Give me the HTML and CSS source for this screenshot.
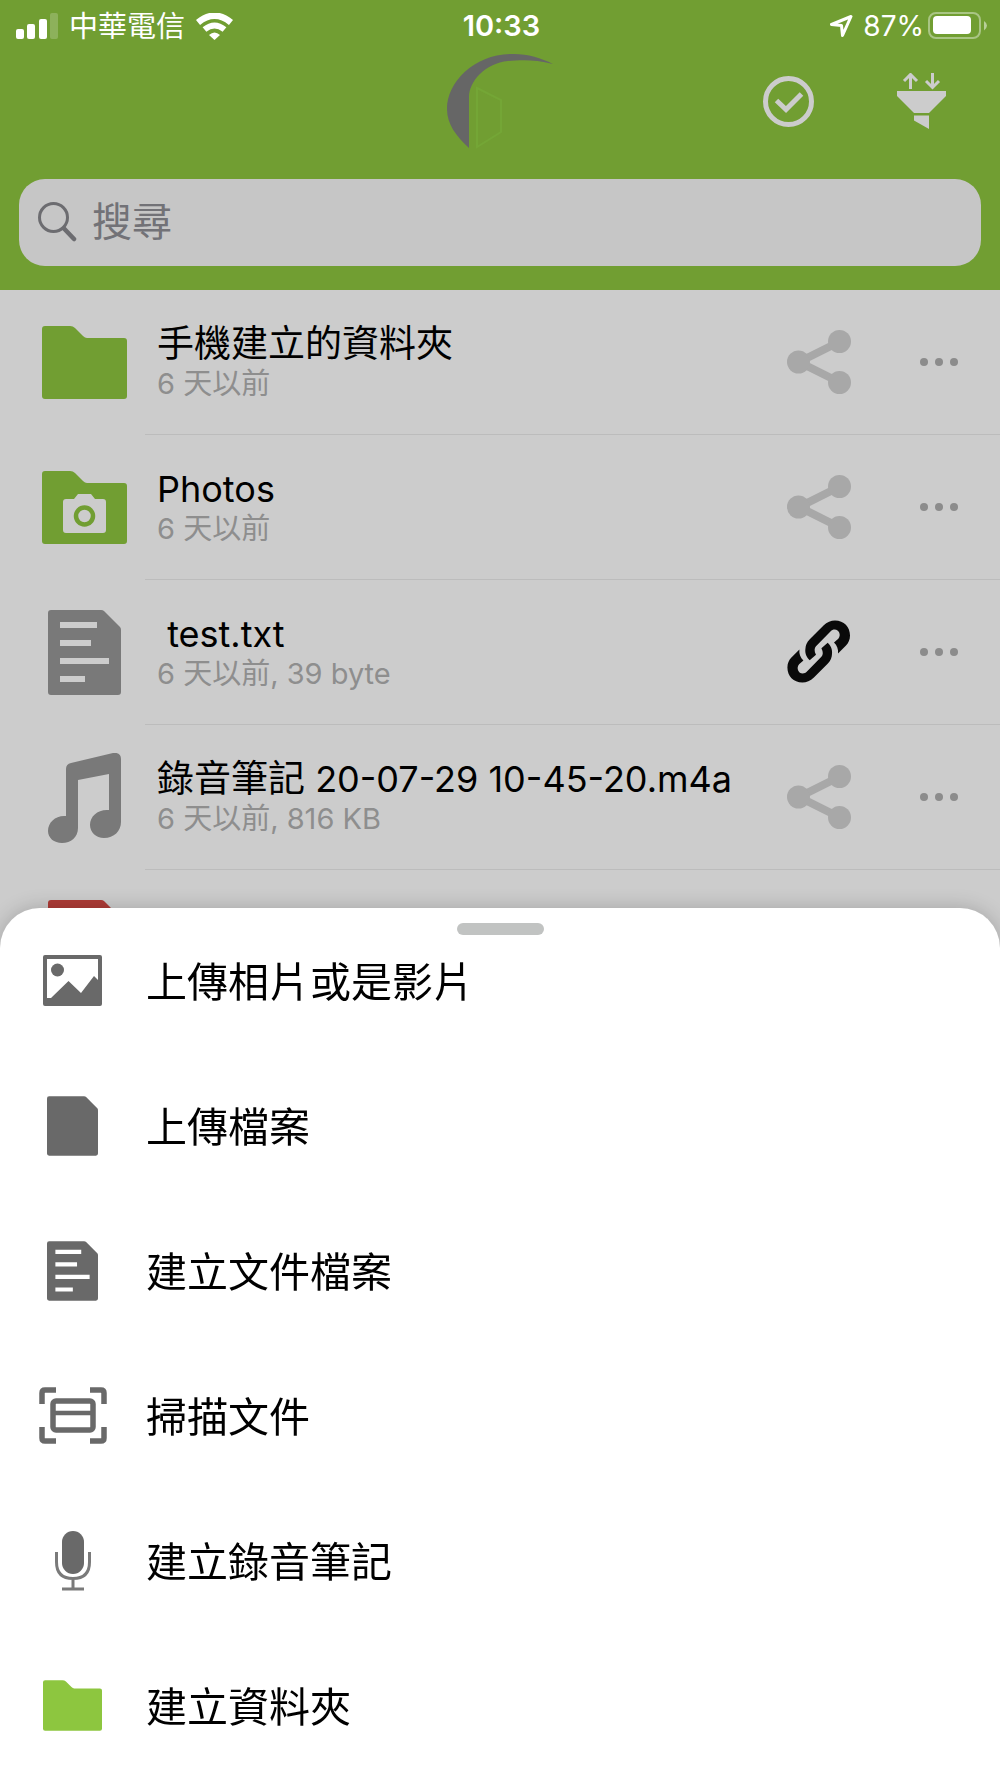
FILE: index.html
```html
<!DOCTYPE html>
<html lang="zh-Hant">
<head>
<meta charset="utf-8">
<meta name="viewport" content="width=device-width, initial-scale=1">
<title>檔案</title>
<link rel="stylesheet" href="styles.css">
</head>
<body>
<svg class="sprite" aria-hidden="true">
  <symbol id="folder" viewBox="0 0 85 73">
    <path d="M3 0H28Q31 0 33 2L41 10Q43 12 45 12H82Q85 12 85 15V70Q85 73 82 73H3Q0 73 0 70V3Q0 0 3 0Z"/>
  </symbol>
  <symbol id="page" viewBox="0 0 73 85">
    <path d="M3 0H53Q55 0 56 1L72 17Q73 18 73 20V82Q73 85 70 85H3Q0 85 0 82V3Q0 0 3 0Z"/>
  </symbol>
  <symbol id="document" viewBox="0 0 73 85">
    <path fill-rule="evenodd" d="M3 0H53Q55 0 56 1L72 17Q73 18 73 20V82Q73 85 70 85H3Q0 85 0 82V3Q0 0 3 0ZM12 12V18H49V12ZM12 30V36H43V30ZM12 48V54H61V48ZM12 66V72H37V66Z"/>
  </symbol>
  <symbol id="share" viewBox="0 0 64 64">
    <path d="M52 12L12 32L52 52" fill="none" stroke="currentColor" stroke-width="8"/>
    <circle cx="11.500" cy="32" r="11.500"/><circle cx="52.500" cy="11.500" r="11.500"/><circle cx="52.500" cy="52.500" r="11.500"/>
  </symbol>
  <symbol id="link-half" viewBox="0 0 64 64">
    <path d="M22.700 40.200C18.500 36.500 18 31.500 18.400 29C18.600 25.500 19.500 22.500 23 19L36.500 5.500C40 2 44 .5 48 .5C57 .5 63 7 63 15.500C63 19.500 61.500 23 59 25.500L51 33.500C51.500 29 50 25.500 47 22.500L51.300 18.800C54.500 15 52 9.500 47.700 9.500C46 9.500 44.700 10.200 43.700 11.200L29 26.200C27.300 28 27 31 29 34.800Z"/>
  </symbol>
  <symbol id="dots" viewBox="0 0 38 8">
    <circle cx="4" cy="4" r="4"/><circle cx="19" cy="4" r="4"/><circle cx="34" cy="4" r="4"/>
  </symbol>
</svg>

<header class="header">
  <div class="status">
    <div class="status-left">
      <svg width="42" height="26" viewBox="0 0 42 26" fill="#fff" aria-hidden="true">
        <rect x="0" y="16" width="8" height="10" rx="2"/><rect x="11" y="11" width="8" height="15" rx="2"/><rect x="23" y="6" width="8" height="20" rx="2"/><rect x="34" y="0" width="8" height="26" rx="2" opacity=".2"/>
      </svg>
      <span class="carrier">中華電信</span>
      <svg width="37" height="27" viewBox="0 0 37 27" fill="none" stroke="#fff" aria-hidden="true">
        <path d="M2 9.500Q18.500-4 35 9.500" stroke-width="6.500"/><path d="M8.500 16.500Q18.500 8.500 28.500 16.500" stroke-width="6"/><path d="M13 22Q18.500 17 24 22L18.500 27Z" fill="#fff" stroke="none"/>
      </svg>
    </div>
    <time class="clock">10:33</time>
    <div class="status-right">
      <svg width="23" height="22" viewBox="0 0 23 22" fill="none" stroke="#fff" stroke-width="3" stroke-linejoin="round" aria-hidden="true"><path d="M21 1.500L1.500 9.500L11.500 10.500L12.500 20.500Z"/></svg>
      <span class="charge">87%</span>
      <svg class="battery" width="59" height="28" viewBox="0 0 59 28" aria-hidden="true">
        <rect x="1" y="1" width="51" height="25" rx="7" fill="none" stroke="#fff" stroke-width="2" opacity=".4"/><rect x="5" y="4" width="38" height="18" rx="4" fill="#fff"/><path d="M56 9Q59 11 59 13.500T56 18.500Z" fill="#fff" opacity=".5"/>
      </svg>
    </div>
  </div>
  <div class="toolbar">
    <svg class="logo" width="106" height="96" viewBox="0 0 106 96" role="img" aria-label="Logo">
      <path d="M22 95C9 83 0 71 0 56C0 28 29 0 67 1C81 1 94 5 106 11C87 6 73 7 61 8C39 10 22 28 22 44Z" fill="#666"/>
      <path d="M30 35L54 47V79L30 94Z" fill="none" stroke="#74a636" stroke-width="2"/>
    </svg>
    <div class="actions">
      <button class="icon-button" aria-label="選取">
        <svg width="51" height="51" viewBox="0 0 51 51" fill="none" stroke="#ccc" aria-hidden="true"><circle cx="25.500" cy="25.500" r="23" stroke-width="5"/><path d="M13.500 24.500L23 33.500L38.500 18" stroke-width="5"/></svg>
      </button>
      <button class="icon-button" aria-label="排序與篩選">
        <svg width="49" height="56" viewBox="0 0 49 56" fill="#ccc" aria-hidden="true"><path d="M0 18H49V23L32 40H17L0 23ZM17 42.500H32V56L17 47.500Z"/><path d="M13.500 16V2M7 8L13.500 1.500L20 8M35.500 0V14M29 8L35.500 14.500L42 8" fill="none" stroke="#ccc" stroke-width="3"/></svg>
      </button>
    </div>
  </div>
  <form class="search" role="search">
    <svg width="39" height="40" viewBox="0 0 39 40" fill="none" stroke="#6c6c70" aria-hidden="true"><circle cx="15.500" cy="15.500" r="14" stroke-width="3"/><path d="M26 26.500L36 37" stroke-width="4.500" stroke-linecap="round"/></svg>
    <input class="search-input" type="text" placeholder="搜尋" aria-label="搜尋">
  </form>
</header>

<main>
  <ul class="files">
    <li class="file">
      <div class="file-icon"><svg class="green" width="85" height="73"><use href="#folder"/></svg></div>
      <div class="file-body">
        <div class="file-text"><div class="file-name">手機建立的資料夾</div><div class="file-meta">6 天以前</div></div>
        <button class="icon-button share" aria-label="分享"><svg width="64" height="64"><use href="#share"/></svg></button>
        <button class="icon-button more" aria-label="更多"><svg width="38" height="8"><use href="#dots"/></svg></button>
      </div>
    </li>
    <li class="file">
      <div class="file-icon"><svg class="green" width="85" height="73" viewBox="0 0 85 73"><use href="#folder"/><path d="M24 28H32L36 23H49L53 28H61Q64 28 64 31V59Q64 62 61 62H24Q21 62 21 59V31Q21 28 24 28Z" fill="#ccc"/><circle cx="42.500" cy="45" r="8.500" fill="none" stroke="#719e32" stroke-width="4.500"/></svg></div>
      <div class="file-body">
        <div class="file-text"><div class="file-name"><span class="latin">Photos</span></div><div class="file-meta">6 天以前</div></div>
        <button class="icon-button share" aria-label="分享"><svg width="64" height="64"><use href="#share"/></svg></button>
        <button class="icon-button more" aria-label="更多"><svg width="38" height="8"><use href="#dots"/></svg></button>
      </div>
    </li>
    <li class="file">
      <div class="file-icon"><svg class="gray" width="73" height="85"><use href="#document"/></svg></div>
      <div class="file-body">
        <div class="file-text"><div class="file-name"><span class="latin"> test.txt</span></div><div class="file-meta">6 天以前, 39 byte</div></div>
        <button class="icon-button linked" aria-label="連結"><svg width="64" height="64" viewBox="0 0 64 64"><use href="#link-half"/><use href="#link-half" transform="rotate(180 31.700 31.500)"/></svg></button>
        <button class="icon-button more" aria-label="更多"><svg width="38" height="8"><use href="#dots"/></svg></button>
      </div>
    </li>
    <li class="file">
      <div class="file-icon"><svg class="gray" width="73" height="90" viewBox="0 0 73 90"><path d="M23 10L65 0Q73-1 73 6V69C73 78 66 85 56 85C48 85 42 79 42 72C42 63 50 56 61 57V21L30 27V75C30 84 23 90 14 90C6 90 0 85 0 78C0 69 8 62 18 63V16Q18 11 23 10Z"/></svg></div>
      <div class="file-body">
        <div class="file-text"><div class="file-name">錄音筆記<span class="latin"> 20-07-29 10-45-20.m4a</span></div><div class="file-meta">6 天以前, 816 KB</div></div>
        <button class="icon-button share" aria-label="分享"><svg width="64" height="64"><use href="#share"/></svg></button>
        <button class="icon-button more" aria-label="更多"><svg width="38" height="8"><use href="#dots"/></svg></button>
      </div>
    </li>
    <li class="file">
      <div class="file-icon"><svg class="red" width="73" height="85"><use href="#page"/></svg></div>
    </li>
  </ul>
</main>

<section class="sheet" aria-label="新增">
  <div class="handle"></div>
  <button class="option"><span class="option-icon"><svg width="59" height="51" viewBox="0 0 59 51"><path fill-rule="evenodd" d="M2 0H57Q59 0 59 2V49Q59 51 57 51H2Q0 51 0 49V2Q0 0 2 0ZM4 4V43H8L25.500 26L38 38L51 21L55 25V4Z"/><circle cx="14.500" cy="15" r="6.500"/></svg></span><span class="option-label">上傳相片或是影片</span></button>
  <button class="option"><span class="option-icon"><svg width="51" height="60"><use href="#page"/></svg></span><span class="option-label">上傳檔案</span></button>
  <button class="option"><span class="option-icon"><svg width="51" height="60"><use href="#document"/></svg></span><span class="option-label">建立文件檔案</span></button>
  <button class="option"><span class="option-icon"><svg width="68" height="57" viewBox="0 0 68 57" fill="none" stroke="#696969" stroke-width="5.500"><path d="M17 3H6Q3 3 3 6V17M51 3H62Q65 3 65 6V17M3 40V51Q3 54 6 54H17M65 40V51Q65 54 62 54H51"/><rect x="14" y="14" width="40" height="29" rx="3"/><path d="M14 26H54" stroke-width="4.500"/></svg></span><span class="option-label">掃描文件</span></button>
  <button class="option"><span class="option-icon"><svg width="36" height="60" viewBox="0 0 36 60"><rect x="7" y="0" width="22" height="43" rx="11"/><path d="M1.500 21V31Q1.500 47.500 18 47.500T34.500 31V21M18 47V58M7 58H29" fill="none" stroke="#7a7a7a" stroke-width="3"/></svg></span><span class="option-label">建立錄音筆記</span></button>
  <button class="option"><span class="option-icon"><svg class="bright" width="59" height="51"><use href="#folder"/></svg></span><span class="option-label">建立資料夾</span></button>
</section>
</body>
</html>
```
FILE: styles.css
```css
* {
  box-sizing: border-box;
}

body {
  margin: 0;
  min-height: 100vh;
  background: #ccc;
  color: #000;
  font-family: Inter, "Noto Sans CJK TC", sans-serif;
}

button {
  border: 0;
  padding: 0;
  background: none;
  color: inherit;
  font: inherit;
}

svg {
  display: block;
  flex: none;
}

.sprite {
  display: none;
}

.header {
  background: #719e32;
  padding: 0 19px 24px;
}

.status {
  display: grid;
  grid-template-columns: 1fr auto 1fr;
  align-items: center;
  height: 50px;
  margin: 0 -6px 0 -3px;
  color: #fff;
  font-size: 28px;
  line-height: 50px;
}

.status-left,
.status-right {
  display: flex;
  align-items: center;
}

.status-left {
  gap: 11px;
}

.status-right {
  justify-content: flex-end;
  gap: 4px;
}

.charge {
  padding-left: 6px;
}

.carrier {
  padding-top: 2px;
  font-size: 29px;
}

.clock {
  font-size: 29px;
  font-weight: 600;
}

.toolbar {
  display: grid;
  grid-template-columns: 1fr auto 1fr;
  align-items: center;
  height: 102px;
  margin-bottom: 27px;
}

.logo {
  grid-column: 2;
}

.actions {
  display: flex;
  justify-content: flex-end;
  gap: 83px;
  padding-right: 35px;
}

.icon-button {
  display: flex;
  align-items: center;
  justify-content: center;
}

.search {
  display: flex;
  align-items: center;
  gap: 15px;
  height: 87px;
  padding: 0 19px 2px;
  border-radius: 26px;
  background: #c6c6c6;
}

.search-input {
  flex: 1;
  min-width: 0;
  border: 0;
  padding: 0;
  background: none;
  color: #000;
  font: inherit;
  font-size: 40px;
  line-height: 60px;
}

.search-input::placeholder {
  color: #727277;
  opacity: 1;
}

.files {
  margin: 0;
  padding: 0;
  list-style: none;
}

.file {
  display: flex;
  height: 145px;
}

.file-icon {
  display: flex;
  align-items: center;
  justify-content: center;
  width: 145px;
  padding-left: 24px;
}

.file-body {
  display: flex;
  flex: 1;
  align-items: center;
  min-width: 0;
  padding: 0 21px 0 12px;
  border-bottom: 1px solid #bcbcbc;
}

.file-text {
  flex: 1;
  min-width: 0;
  padding-top: 4px;
}

.file-name {
  font-size: 37px;
  line-height: 40px;
  white-space: pre;
}

.latin {
  font-size: 36px;
}

.file-meta {
  color: #8e8e8e;
  font-size: 29px;
  line-height: 40px;
}

.share {
  color: #a8a8a8;
  fill: #a8a8a8;
}

.linked {
  fill: #0a0a0a;
}

.more {
  width: 80px;
  height: 64px;
  margin-left: 48px;
  fill: #8c8c8c;
}

.green {
  fill: #719e32;
}

.gray {
  fill: #797979;
}

.red {
  fill: #ad3b36;
}

.bright {
  fill: #8dc63f;
}

.sheet {
  position: fixed;
  right: 0;
  bottom: 0;
  left: 0;
  border-radius: 40px 40px 0 0;
  background: #fff;
  box-shadow: 0 0 20px rgba(0, 0, 0, 0.2);
}

.handle {
  position: absolute;
  top: 15px;
  left: 50%;
  width: 87px;
  height: 12px;
  margin-left: -43px;
  border-radius: 6px;
  background: #c1c3c2;
}

.option {
  display: flex;
  align-items: center;
  width: 100%;
  height: 145px;
  font-size: 41px;
  line-height: 60px;
  text-align: left;
}

.option-icon {
  display: flex;
  justify-content: center;
  width: 145px;
  fill: #696969;
}

.option-label {
  padding: 3px 0 0 1px;
}
```
